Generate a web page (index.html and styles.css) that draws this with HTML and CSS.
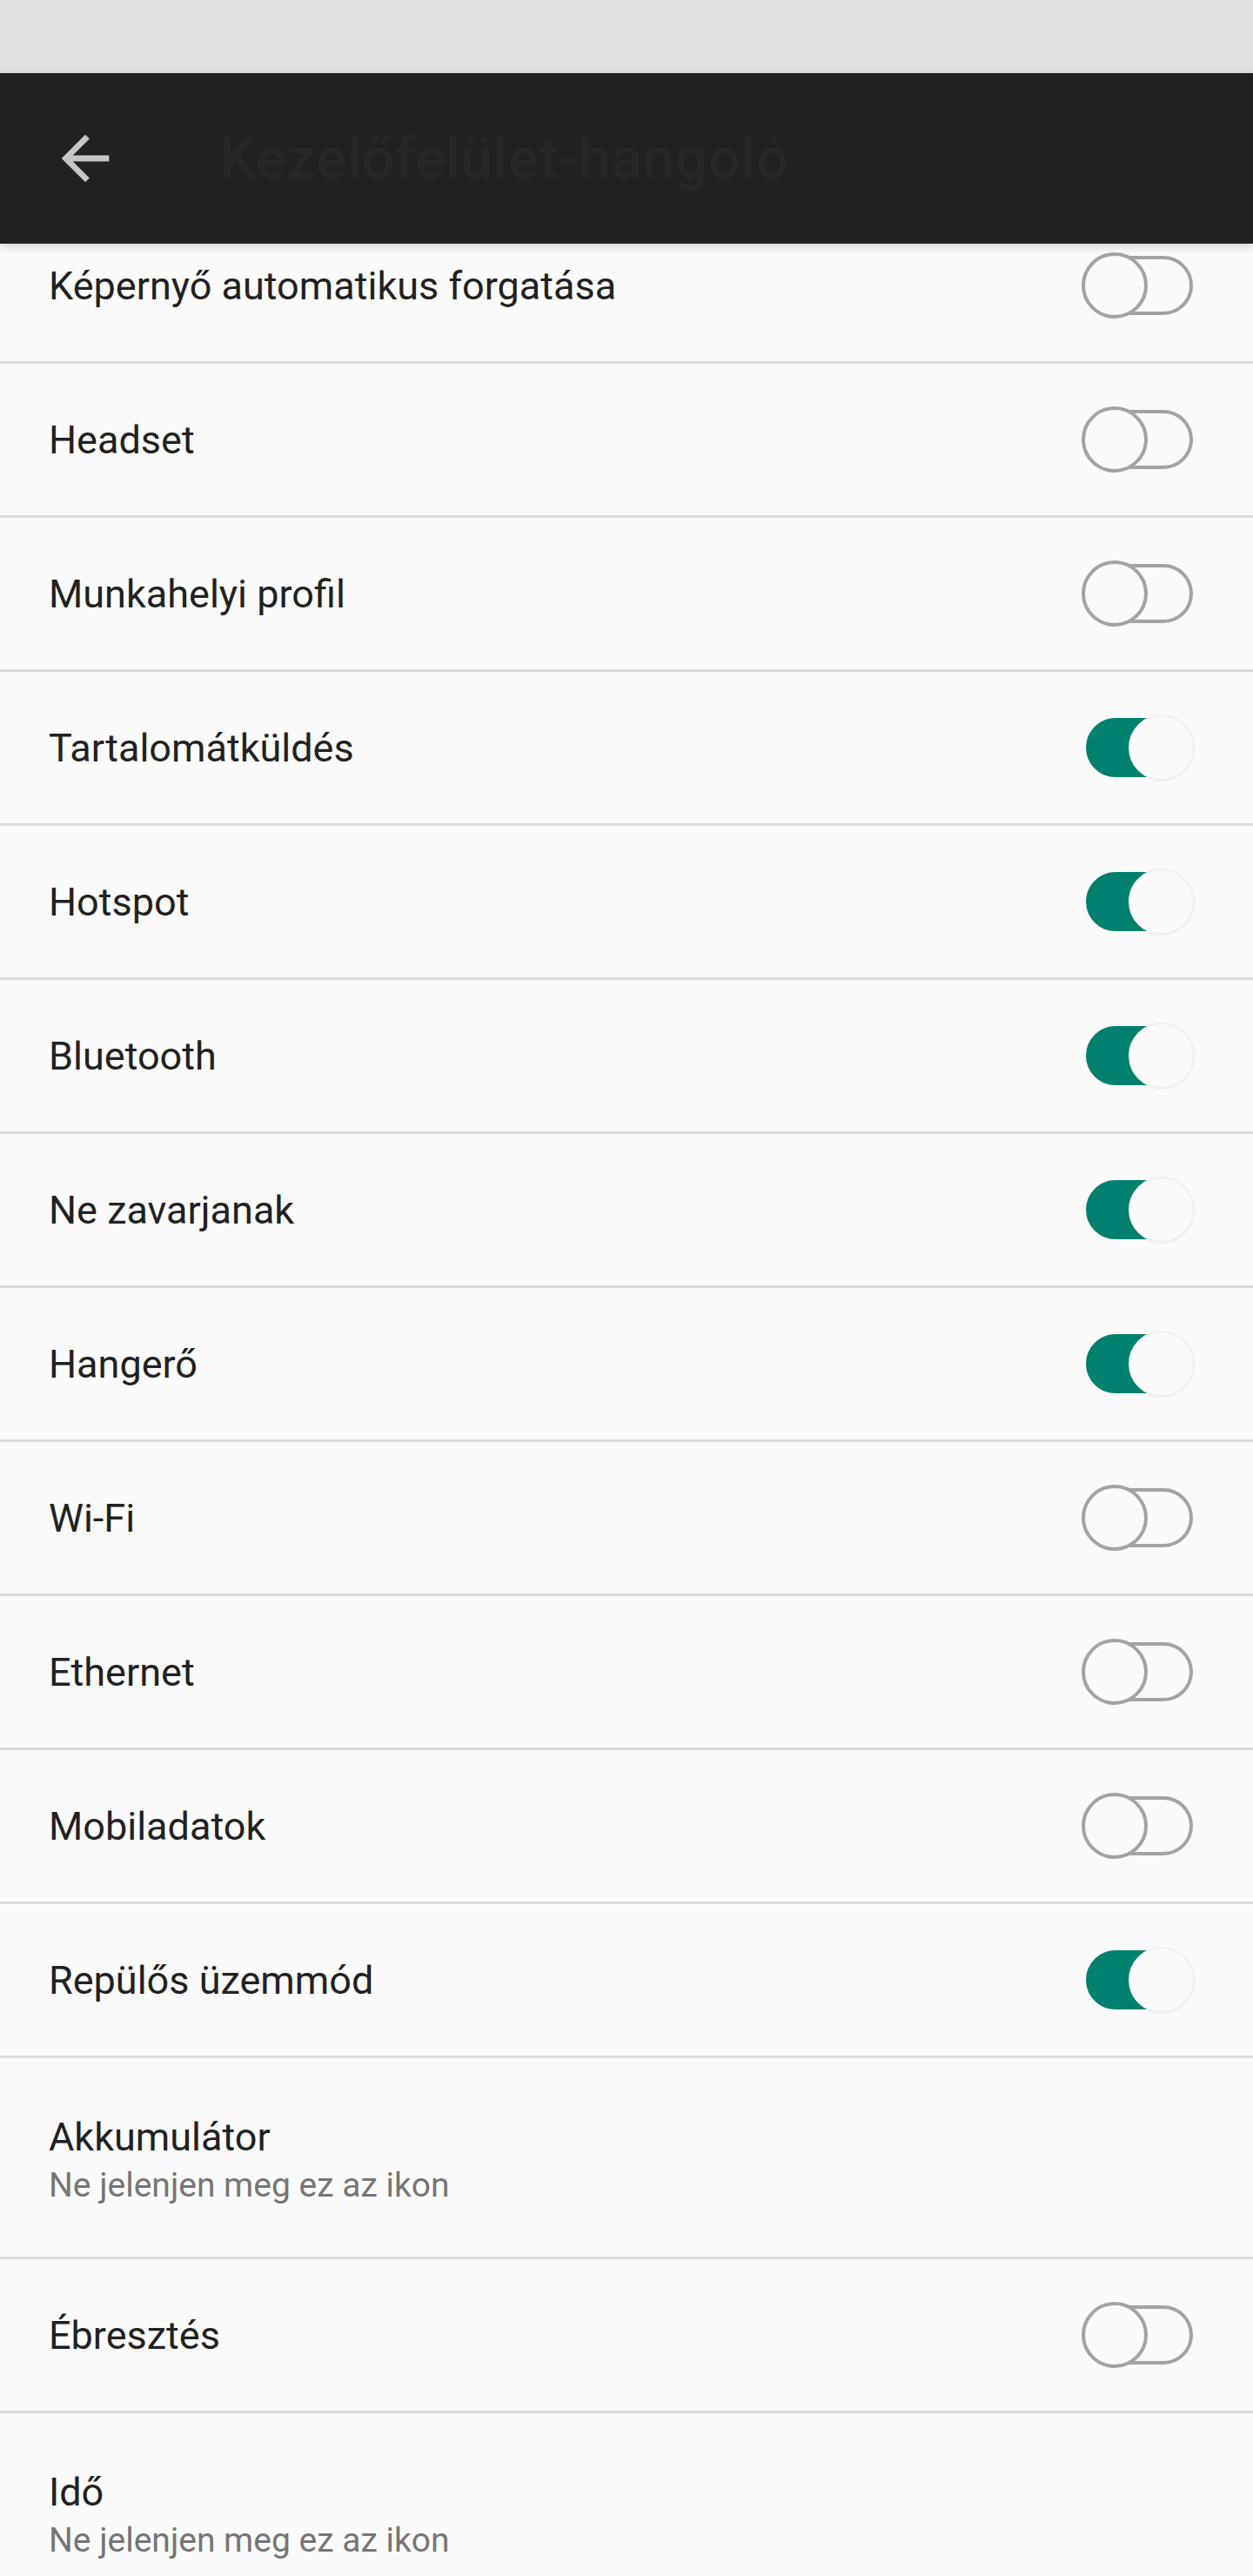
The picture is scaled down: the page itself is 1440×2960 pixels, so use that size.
FILE: index.html
```html
<!DOCTYPE html>
<html lang="hu">
<head>
    <meta charset="UTF-8">
    <meta name="viewport" content="width=device-width, initial-scale=1.0">
    <title>Kezelőfelület-hangoló</title>
    <link rel="stylesheet" href="styles.css">
</head>
<body>
    <div class="status-bar"></div>

    <div class="app-bar">
        <svg class="back" viewBox="0 0 24 24">
            <path d="M20 11H7.83l5.59-5.59L12 4l-8 8 8 8 1.41-1.41L7.83 13H20v-2z"/>
        </svg>
        <h1 class="title">Kezelőfelület-hangoló</h1>
    </div>

    <div class="list">
        <div class="row">
            <span class="label">Képernyő automatikus forgatása</span>
            <div class="switch"><div class="track"></div><div class="thumb"></div></div>
        </div>
        <div class="row">
            <span class="label">Headset</span>
            <div class="switch"><div class="track"></div><div class="thumb"></div></div>
        </div>
        <div class="row">
            <span class="label">Munkahelyi profil</span>
            <div class="switch"><div class="track"></div><div class="thumb"></div></div>
        </div>
        <div class="row">
            <span class="label">Tartalomátküldés</span>
            <div class="switch on"><div class="track"></div><div class="thumb"></div></div>
        </div>
        <div class="row">
            <span class="label">Hotspot</span>
            <div class="switch on"><div class="track"></div><div class="thumb"></div></div>
        </div>
        <div class="row">
            <span class="label">Bluetooth</span>
            <div class="switch on"><div class="track"></div><div class="thumb"></div></div>
        </div>
        <div class="row">
            <span class="label">Ne zavarjanak</span>
            <div class="switch on"><div class="track"></div><div class="thumb"></div></div>
        </div>
        <div class="row">
            <span class="label">Hangerő</span>
            <div class="switch on"><div class="track"></div><div class="thumb"></div></div>
        </div>
        <div class="row">
            <span class="label">Wi-Fi</span>
            <div class="switch"><div class="track"></div><div class="thumb"></div></div>
        </div>
        <div class="row">
            <span class="label">Ethernet</span>
            <div class="switch"><div class="track"></div><div class="thumb"></div></div>
        </div>
        <div class="row">
            <span class="label">Mobiladatok</span>
            <div class="switch"><div class="track"></div><div class="thumb"></div></div>
        </div>
        <div class="row">
            <span class="label">Repülős üzemmód</span>
            <div class="switch on"><div class="track"></div><div class="thumb"></div></div>
        </div>
        <div class="row two-line">
            <span class="label">Akkumulátor</span>
            <span class="summary">Ne jelenjen meg ez az ikon</span>
        </div>
        <div class="row">
            <span class="label">Ébresztés</span>
            <div class="switch"><div class="track"></div><div class="thumb"></div></div>
        </div>
        <div class="row two-line">
            <span class="label">Idő</span>
            <span class="summary">Ne jelenjen meg ez az ikon</span>
        </div>
    </div>
</body>
</html>
```

FILE: styles.css
```css
body {
    margin: 0;
    height: 2960px;
    overflow: hidden;
    background: #fafafa;
    font-family: Roboto, "Noto Sans", sans-serif;
}
.status-bar {
    height: 84px;
    background: #e0e0e0;
}
.app-bar {
    position: relative;
    z-index: 2;
    height: 196px;
    display: flex;
    align-items: center;
    padding-left: 57px;
    background: #212121;
    box-shadow: 0 3px 10px rgba(0, 0, 0, 0.18);
}
.back {
    width: 82px;
    height: 82px;
    fill: #c6c6c6;
}
.title {
    margin: 0 0 0 113px;
    font-size: 67px;
    font-weight: 500;
    color: #272727;
}
.list {
    margin-top: -39px;
}
.row {
    height: 174px;
    display: flex;
    align-items: center;
    justify-content: space-between;
    padding: 0 67px 0 56px;
    border-bottom: 3px solid #dcdcdc;
}
.label {
    font-size: 45px;
    color: #212121;
}
.two-line {
    flex-direction: column;
    align-items: flex-start;
    justify-content: flex-start;
    padding-top: 64px;
    box-sizing: border-box;
    height: 231px;
}
.two-line .label {
    line-height: 53px;
}
.summary {
    margin-top: 3px;
    font-size: 39px;
    line-height: 53px;
    color: #757575;
}
.switch {
    position: relative;
    width: 130px;
    height: 76px;
}
.track {
    position: absolute;
    left: 5px;
    top: 4px;
    width: 123px;
    height: 68px;
    box-sizing: border-box;
    border: 4px solid #a3a3a3;
    border-radius: 34px;
}
.thumb {
    position: absolute;
    left: 0;
    top: 0;
    width: 76px;
    height: 76px;
    box-sizing: border-box;
    border: 4px solid #a3a3a3;
    border-radius: 50%;
    background: #fafafa;
}
.switch.on .track {
    background: #00806e;
    border-color: #00806e;
}
.switch.on .thumb {
    left: auto;
    right: 0;
    border: 2px solid #efefef;
    box-shadow: 0 1px 2px rgba(0, 0, 0, 0.05);
}
```
